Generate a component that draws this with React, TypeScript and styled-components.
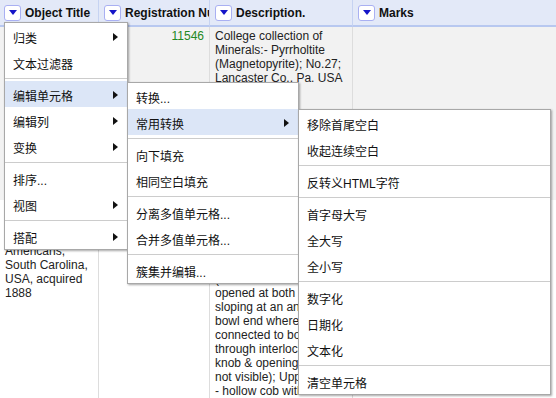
import React from "react";
import styled, { createGlobalStyle } from "styled-components";

const GlobalStyle = createGlobalStyle`
  *, *::before, *::after { box-sizing: border-box; }
  html, body { margin: 0; padding: 0; background: #fff; }
  body {
    font-family: "Liberation Sans", Arial, "Noto Sans CJK SC", sans-serif;
    font-size: 12px;
    color: #222;
  }
`;

const Page = styled.div`
  position: relative;
  width: 556px;
  height: 398px;
  overflow: hidden;
  background: #fff;
`;

const Row = styled.div<{ $bg?: string; $height?: number }>`
  display: grid;
  grid-template-columns: 99px 111px 143px 1fr;
  background: ${(p) => p.$bg || "#fff"};
  height: ${(p) => (p.$height ? `${p.$height}px` : "auto")};
`;

const HeaderCell = styled.div`
  display: flex;
  align-items: center;
  gap: 4px;
  height: 27px;
  padding-left: 5px;
  background: #e3e9f8;
  border-right: 1px solid #c6d3f2;
  border-bottom: 2px solid #b8c8f0;
  font-weight: bold;
  color: #111;
  white-space: nowrap;
  overflow: hidden;
  &:first-child { padding-left: 4px; }
  &:last-child { border-right: none; }
`;

const ColumnMenuButton = styled.span`
  flex: none;
  width: 17px;
  height: 16px;
  border: 1px solid #a9b0f2;
  border-radius: 3px;
  background: #fff;
  display: flex;
  align-items: center;
  justify-content: center;
  &::after {
    content: "";
    border-left: 4px solid transparent;
    border-right: 4px solid transparent;
    border-top: 5px solid #1515c8;
  }
`;

const Cell = styled.div<{ $numeric?: boolean }>`
  padding: 2px 5px;
  line-height: 14px;
  border-right: 1px solid #ddd;
  overflow: hidden;
  white-space: nowrap;
  text-align: ${(p) => (p.$numeric ? "right" : "left")};
  color: ${(p) => (p.$numeric ? "#282" : "#222")};
  &:last-child { border-right: none; }
`;

const Menu = styled.div<{ $left: number; $top: number; $width: number }>`
  position: absolute;
  left: ${(p) => p.$left}px;
  top: ${(p) => p.$top}px;
  width: ${(p) => p.$width}px;
  background: #fff;
  border: 1px solid #a8a8a8;
  box-shadow: 1px 1px 2px rgba(0, 0, 0, 0.35);
  font-family: "Liberation Sans", Arial, "Noto Sans CJK SC", sans-serif;
  font-size: 12px;
  color: #111;
`;

const MenuItem = styled.div<{ $active?: boolean }>`
  display: flex;
  align-items: center;
  justify-content: space-between;
  height: 26px;
  padding: 2px 9px 0 8px;
  white-space: nowrap;
  background: ${(p) => (p.$active ? "#dce6f7" : "transparent")};
`;

const SubArrow = styled.span`
  width: 0;
  height: 0;
  border-top: 4.5px solid transparent;
  border-bottom: 4.5px solid transparent;
  border-left: 5px solid #111;
`;

const Separator = styled.div`
  height: 1px;
  margin: 3px 0 2px;
  background: #ccc;
`;

type Entry = { label: string; sub?: boolean; active?: boolean } | "sep";

const mainMenu: Entry[] = [
  { label: "归类", sub: true },
  { label: "文本过滤器" },
  "sep",
  { label: "编辑单元格", sub: true, active: true },
  { label: "编辑列", sub: true },
  { label: "变换", sub: true },
  "sep",
  { label: "排序..." },
  { label: "视图", sub: true },
  "sep",
  { label: "搭配", sub: true },
];

const editCellsMenu: Entry[] = [
  { label: "转换..." },
  { label: "常用转换", sub: true, active: true },
  "sep",
  { label: "向下填充" },
  { label: "相同空白填充" },
  "sep",
  { label: "分离多值单元格..." },
  { label: "合并多值单元格..." },
  "sep",
  { label: "簇集并编辑..." },
];

const transformMenu: Entry[] = [
  { label: "移除首尾空白" },
  { label: "收起连续空白" },
  "sep",
  { label: "反转义HTML字符" },
  "sep",
  { label: "首字母大写" },
  { label: "全大写" },
  { label: "全小写" },
  "sep",
  { label: "数字化" },
  { label: "日期化" },
  { label: "文本化" },
  "sep",
  { label: "清空单元格" },
];

const MenuList: React.FC<{ items: Entry[]; left: number; top: number; width: number }> = ({
  items,
  left,
  top,
  width,
}) => (
  <Menu $left={left} $top={top} $width={width}>
    {items.map((item, i) =>
      item === "sep" ? (
        <Separator key={i} />
      ) : (
        <MenuItem key={i} $active={item.active}>
          <span>{item.label}</span>
          {item.sub && <SubArrow />}
        </MenuItem>
      )
    )}
  </Menu>
);

const Lines: React.FC<{ lines: string[] }> = ({ lines }) => (
  <>
    {lines.map((l, i) => (
      <div key={i}>{l}</div>
    ))}
  </>
);

const columns = ["Object Title", "Registration Number", "Description.", "Marks"];

export default function App() {
  return (
    <Page>
      <GlobalStyle />
      <Row>
        {columns.map((c) => (
          <HeaderCell key={c}>
            <ColumnMenuButton />
            {c}
          </HeaderCell>
        ))}
      </Row>
      <Row $bg="#f2f2f2" $height={173}>
        <Cell>
          <Lines lines={["Mineral", "specimen"]} />
        </Cell>
        <Cell $numeric>11546</Cell>
        <Cell>
          <Lines
            lines={[
              "College collection of",
              "Minerals:- Pyrrholtite",
              "(Magnetopyrite); No.27;",
              "Lancaster Co., Pa. USA",
            ]}
          />
        </Cell>
        <Cell />
      </Row>
      <Row>
        <Cell>
          <Lines
            lines={[
              "Pipe; made by",
              "the Catawba",
              "Native",
              "Americans,",
              "South Carolina,",
              "USA, acquired",
              "1888",
            ]}
          />
        </Cell>
        <Cell />
        <Cell>
          <Lines
            lines={[
              "Clay pipe, bowl",
              "and stem joined,",
              "stem tapering to",
              "mouthpiece, bowl",
              "with incised band",
              "(stem hollow and",
              "opened at both ends,",
              "sloping at an angle to",
              "bowl end where it is",
              "connected to bowl",
              "through interlocking",
              "knob & opening (latter",
              "not visible); Upper stem",
              "- hollow cob with",
            ]}
          />
        </Cell>
        <Cell />
      </Row>
      <MenuList items={mainMenu} left={4} top={22} width={124} />
      <MenuList items={editCellsMenu} left={127} top={82} width={172} />
      <MenuList items={transformMenu} left={298} top={109} width={253} />
    </Page>
  );
}
